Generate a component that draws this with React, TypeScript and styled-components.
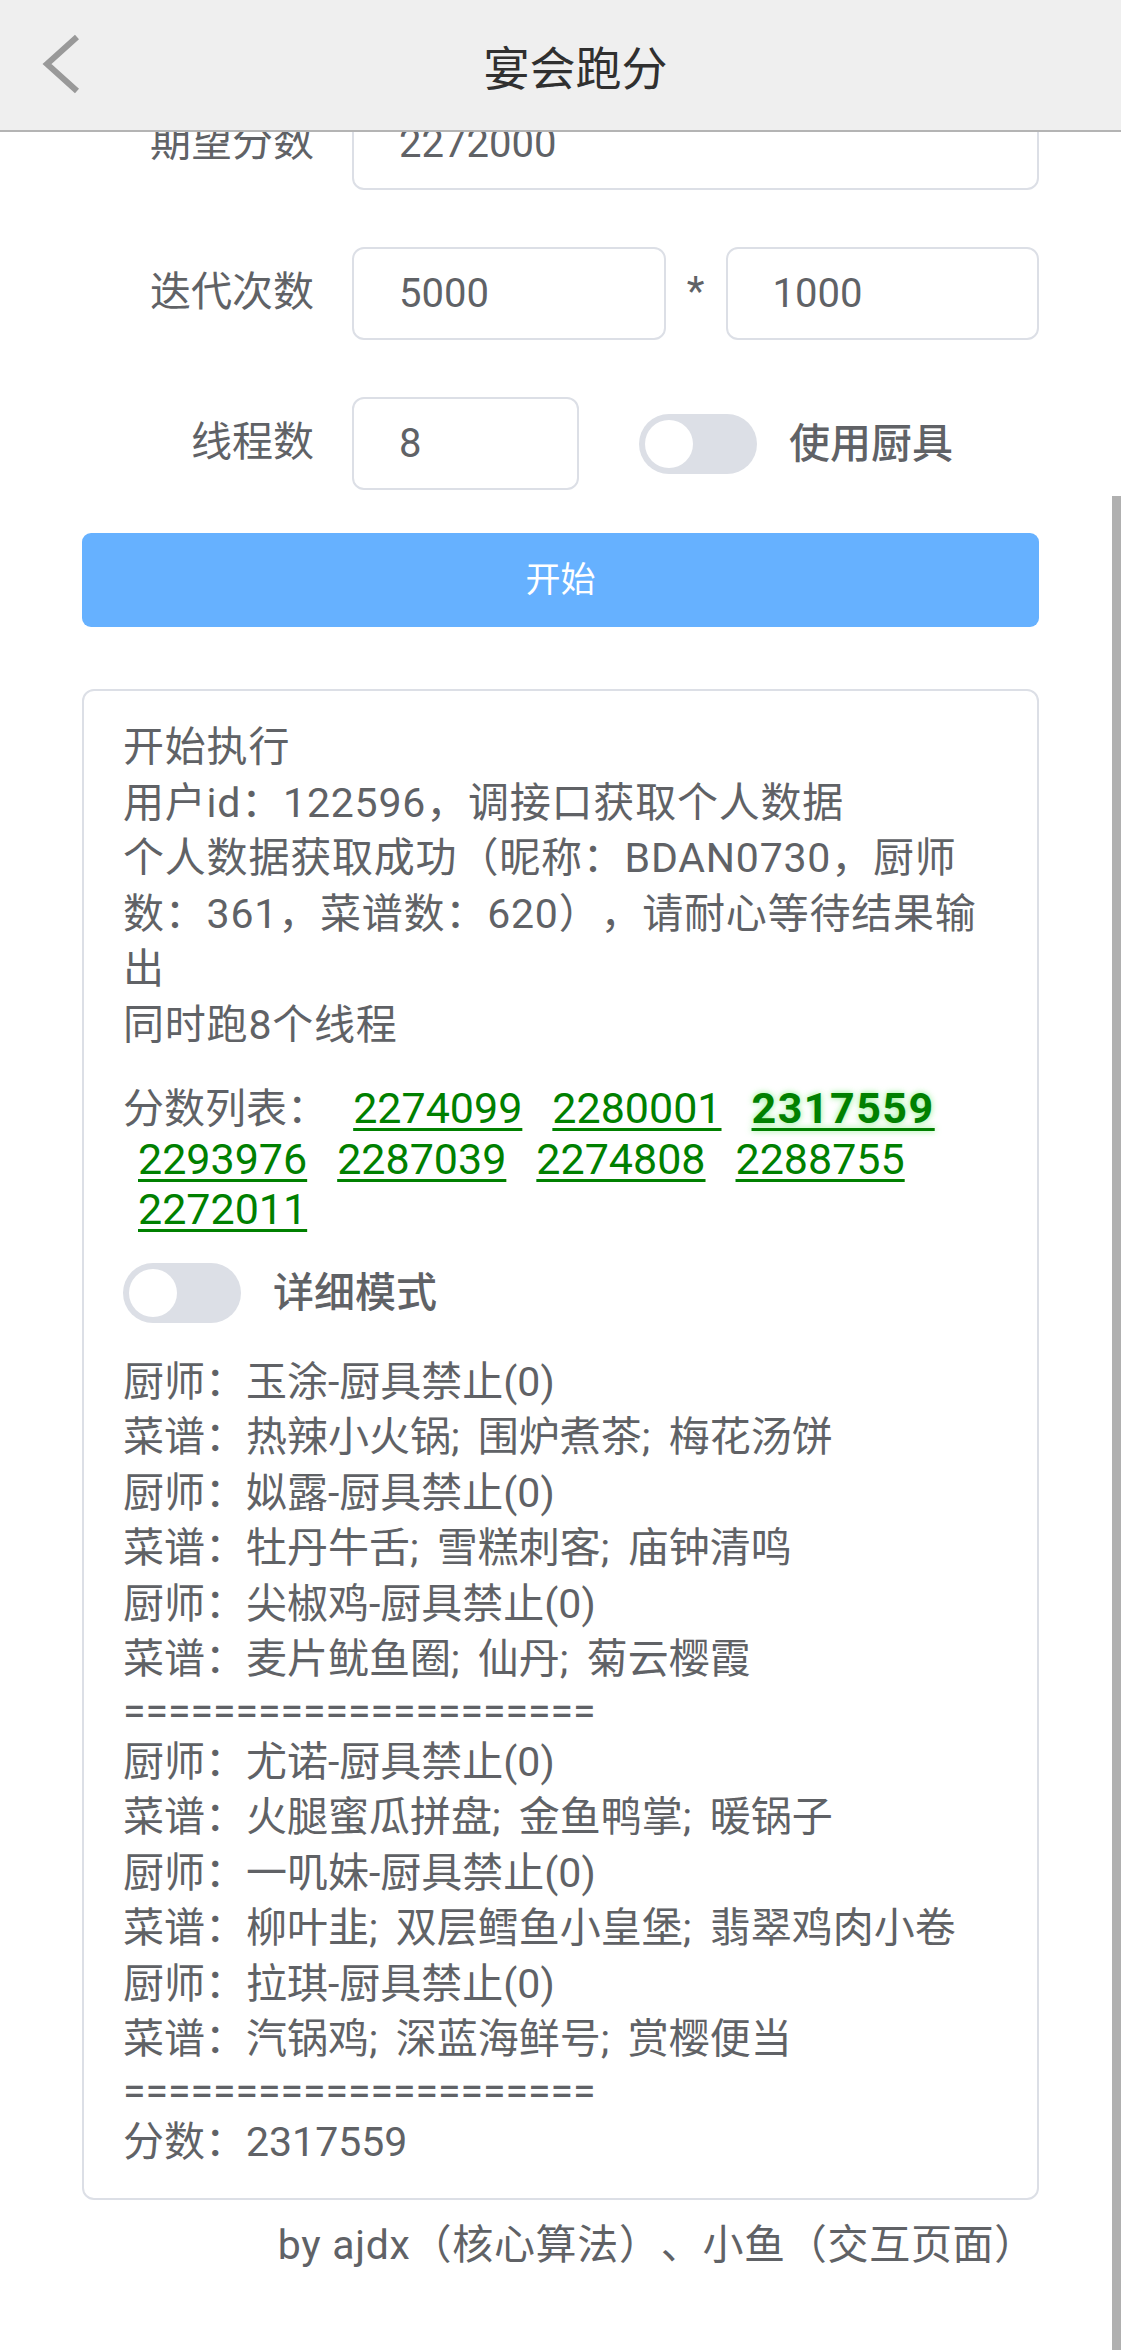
import * as React from "react";
import styled, { createGlobalStyle } from "styled-components";

const GlobalStyle = createGlobalStyle`
    html, body {
        margin: 0;
        padding: 0;
        background: #fff;
    }

    body {
        font-family: Roboto, "Noto Sans CJK SC", sans-serif;
        color: #606266;
        text-spacing-trim: space-all;
    }
`;

const scores = [
    { value: "2274099" },
    { value: "2280001" },
    { value: "2317559", best: true },
    { value: "2293976" },
    { value: "2287039" },
    { value: "2274808" },
    { value: "2288755" },
    { value: "2272011" },
];

const intro = [
    "开始执行",
    "用户id：122596，调接口获取个人数据",
    "个人数据获取成功（昵称：BDAN0730，厨师",
    "数：361，菜谱数：620），请耐心等待结果输",
    "出",
    "同时跑8个线程",
];

const SEP = "=====================";

const details = [
    "厨师：玉涂-厨具禁止(0)",
    "菜谱：热辣小火锅; 围炉煮茶; 梅花汤饼",
    "厨师：姒露-厨具禁止(0)",
    "菜谱：牡丹牛舌; 雪糕刺客; 庙钟清鸣",
    "厨师：尖椒鸡-厨具禁止(0)",
    "菜谱：麦片鱿鱼圈; 仙丹; 菊云樱霞",
    SEP,
    "厨师：尤诺-厨具禁止(0)",
    "菜谱：火腿蜜瓜拼盘; 金鱼鸭掌; 暖锅子",
    "厨师：一叽妹-厨具禁止(0)",
    "菜谱：柳叶韭; 双层鳕鱼小皇堡; 翡翠鸡肉小卷",
    "厨师：拉琪-厨具禁止(0)",
    "菜谱：汽锅鸡; 深蓝海鲜号; 赏樱便当",
    SEP,
    "分数：2317559",
];

const Switch = ({ on }: { on?: boolean }) => (
    <Track $on={on}>
        <Knob />
    </Track>
);

const App: React.FC = () => {
    return (
        <>
            <GlobalStyle />
            <Header>
                <BackButton aria-label="back">
                    <svg width="40" height="62" viewBox="0 0 40 62">
                        <polyline points="35,3 5,30 35,57" fill="none" stroke="#999" strokeWidth="6" strokeLinejoin="miter" />
                    </svg>
                </BackButton>
                <Title>宴会跑分</Title>
                <span />
            </Header>

            <Page>
                <FormRow>
                    <Label>期望分数</Label>
                    <Field readOnly value="2272000" />
                </FormRow>
                <FormRow>
                    <Label>迭代次数</Label>
                    <Field readOnly value="5000" />
                    <Times>*</Times>
                    <Field readOnly value="1000" />
                </FormRow>
                <FormRow>
                    <Label>线程数</Label>
                    <Field readOnly value="8" $width={227} />
                    <SwitchWrap $gapLeft={60}>
                        <Switch />
                        <SwitchText>使用厨具</SwitchText>
                    </SwitchWrap>
                </FormRow>

                <StartButton>开始</StartButton>

                <Output>
                    {intro.map((line, i) => (
                        <Line key={i} $spaced>{line}</Line>
                    ))}

                    <ScoreList>
                        分数列表：{" "}
                        {scores.map((s) => (
                            <ScoreLink key={s.value} href="#" $best={s.best}>
                                {s.value}
                            </ScoreLink>
                        ))}
                    </ScoreList>

                    <SwitchWrap $gapTop={23}>
                        <Switch />
                        <SwitchText>详细模式</SwitchText>
                    </SwitchWrap>

                    <Details>
                        {details.map((line, i) => (
                            <Line key={i} $tight={line === SEP}>{line}</Line>
                        ))}
                    </Details>
                </Output>

                <Credits>by ajdx（核心算法）、小鱼（交互页面）</Credits>
            </Page>

            <ScrollThumb />
        </>
    );
};

const Header = styled.header`
    position: fixed;
    top: 0;
    left: 0;
    right: 0;
    height: 130px;
    background: #efefef;
    border-bottom: 2px solid #b4b4b4;
    z-index: 10;
    display: grid;
    grid-template-columns: 120px 1fr 90px;
    align-items: center;
`;

const BackButton = styled.button`
    border: none;
    background: none;
    padding: 0 0 0 42px;
    height: 100%;
    display: flex;
    align-items: center;
`;

const Title = styled.h1`
    margin: 0;
    text-align: center;
    font-size: 46px;
    font-weight: 400;
    color: #303030;
`;

const Page = styled.main`
    padding: 97px 82px 0;
`;

const FormRow = styled.div`
    display: flex;
    align-items: center;
    height: 93px;

    & + & {
        margin-top: 57px;
    }
`;

const Label = styled.label`
    flex-shrink: 0;
    width: 232px;
    margin-right: 38px;
    margin-bottom: 12px;
    text-align: right;
    font-size: 41px;
    color: #606266;
`;

const Field = styled.input<{ $width?: number }>`
    box-sizing: border-box;
    height: 93px;
    flex: ${(p) => (p.$width ? `0 0 ${p.$width}px` : "1 1 0")};
    min-width: 0;
    border: 2px solid #dcdfe6;
    border-radius: 12px;
    padding: 0 0 0 45px;
    font-family: Roboto, sans-serif;
    font-size: 40px;
    color: #606266;
    background: #fff;
    outline: none;
`;

const Times = styled.span`
    flex: 0 0 60px;
    margin-bottom: 6px;
    text-align: center;
    font-size: 41px;
    color: #606266;
`;

const SwitchWrap = styled.div<{ $gapLeft?: number; $gapTop?: number }>`
    display: flex;
    align-items: center;
    gap: 32px;
    margin-left: ${(p) => p.$gapLeft || 0}px;
    margin-top: ${(p) => p.$gapTop || 0}px;
`;

const Track = styled.span<{ $on?: boolean }>`
    box-sizing: border-box;
    display: flex;
    align-items: center;
    justify-content: ${(p) => (p.$on ? "flex-end" : "flex-start")};
    width: 118px;
    height: 60px;
    padding: 0 6px;
    border-radius: 30px;
    background: ${(p) => (p.$on ? "#409eff" : "#dcdfe6")};
`;

const Knob = styled.span`
    width: 48px;
    height: 48px;
    border-radius: 50%;
    background: #fff;
`;

const SwitchText = styled.span`
    margin-bottom: 8px;
    font-size: 41px;
    font-weight: 500;
    color: #606266;
`;

const StartButton = styled.button`
    display: block;
    width: 100%;
    height: 94px;
    margin-top: 43px;
    padding: 0 0 8px;
    border: none;
    border-radius: 9px;
    background: #66b1ff;
    color: #fff;
    font-family: Roboto, "Noto Sans CJK SC", sans-serif;
    font-size: 35px;
`;

const Output = styled.section`
    margin-top: 62px;
    border: 2px solid #dcdfe6;
    border-radius: 12px;
    padding: 29px 40px 28px 39px;
    font-size: 41px;
    color: #606266;
`;

const Line = styled.div<{ $tight?: boolean; $spaced?: boolean }>`
    white-space: nowrap;
    line-height: ${(p) => (p.$tight ? "47px" : "55.5px")};
    letter-spacing: ${(p) => (p.$spaced ? "0.8px" : "0")};
`;

const ScoreList = styled.div`
    margin-top: 31px;
    line-height: 49.5px;
`;

const ScoreLink = styled.a<{ $best?: boolean }>`
    display: inline-block;
    margin: 0 15px;
    font-size: 43px;
    color: green;
    text-decoration: underline;
    text-decoration-thickness: 3px;
    text-underline-offset: 5px;
    font-weight: ${(p) => (p.$best ? 700 : 400)};
    letter-spacing: ${(p) => (p.$best ? "1.5px" : "0")};
    text-shadow: ${(p) => (p.$best ? "0 0 6px rgba(60, 230, 60, 0.6)" : "none")};
`;

const Details = styled.div`
    margin-top: 28px;
    word-spacing: 8px;
`;

const Credits = styled.footer`
    margin-top: 18px;
    padding-right: 3px;
    text-align: right;
    font-size: 41px;
    line-height: 55.5px;
    letter-spacing: 0.7px;
    color: #606266;
`;

const ScrollThumb = styled.div`
    position: fixed;
    top: 496px;
    bottom: 0;
    right: 0;
    width: 9px;
    background: #b0b0b0;
`;

export default App;
